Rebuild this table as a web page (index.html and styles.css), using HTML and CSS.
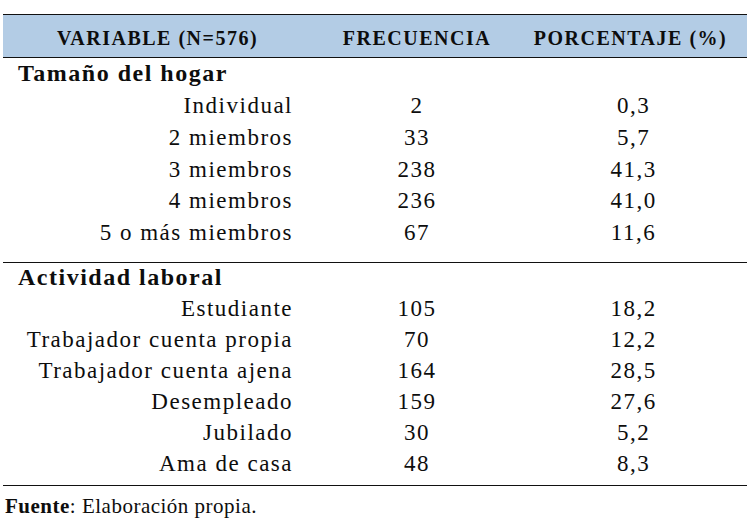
FILE: index.html
```html
<!DOCTYPE html>
<html lang="es">
<head>
<meta charset="utf-8">
<title>Tabla</title>
<link rel="stylesheet" href="styles.css">
</head>
<body>
<div class="page">
  <div class="table">
    <div class="row head">
      <div class="c1">VARIABLE (N=576)</div>
      <div class="c2">FRECUENCIA</div>
      <div class="c3">PORCENTAJE (%)</div>
    </div>
    <div class="group g1">
      <div class="title t1">Tamaño del hogar</div>
      <div class="row data"><div class="c1">Individual</div><div class="c2">2</div><div class="c3">0,3</div></div>
      <div class="row data"><div class="c1">2 miembros</div><div class="c2">33</div><div class="c3">5,7</div></div>
      <div class="row data"><div class="c1">3 miembros</div><div class="c2">238</div><div class="c3">41,3</div></div>
      <div class="row data"><div class="c1">4 miembros</div><div class="c2">236</div><div class="c3">41,0</div></div>
      <div class="row data"><div class="c1">5 o más miembros</div><div class="c2">67</div><div class="c3">11,6</div></div>
    </div>
    <div class="group g2">
      <div class="title t2">Actividad laboral</div>
      <div class="row data"><div class="c1">Estudiante</div><div class="c2">105</div><div class="c3">18,2</div></div>
      <div class="row data"><div class="c1">Trabajador cuenta propia</div><div class="c2">70</div><div class="c3">12,2</div></div>
      <div class="row data"><div class="c1">Trabajador cuenta ajena</div><div class="c2">164</div><div class="c3">28,5</div></div>
      <div class="row data"><div class="c1">Desempleado</div><div class="c2">159</div><div class="c3">27,6</div></div>
      <div class="row data"><div class="c1">Jubilado</div><div class="c2">30</div><div class="c3">5,2</div></div>
      <div class="row data"><div class="c1">Ama de casa</div><div class="c2">48</div><div class="c3">8,3</div></div>
    </div>
  </div>
  <p class="source"><b>Fuente</b>: Elaboración propia.</p>
</div>
</body>
</html>
```

FILE: styles.css
```css
html, body {
  margin: 0;
  padding: 0;
  background: #ffffff;
}
body {
  font-family: "Liberation Serif", Tinos, "Times New Roman", serif;
  color: #0d0d0d;
}
.page {
  padding: 14px 0 0 3px;
}
.table {
  width: 744px;
}
.row {
  display: grid;
  grid-template-columns: 309px 210px 225px;
}
.head {
  background: #b3cce5;
  border-top: 1px solid #111;
  border-bottom: 1px solid #111;
  padding-top: 4px;
  line-height: 38px;
  font-size: 20px;
  font-weight: bold;
  letter-spacing: 1.5px;
  text-align: center;
}
.head .c3 {
  padding-right: 8px;
}
.group {
  border-bottom: 1px solid #111;
}
.g1 {
  padding-bottom: 13px;
}
.g2 {
  padding-bottom: 6px;
}
.title {
  font-size: 24px;
  font-weight: bold;
  letter-spacing: 1.5px;
  padding-left: 15px;
  padding-bottom: 2px;
}
.t1 {
  line-height: 30px;
}
.t2 {
  line-height: 28px;
}
.data {
  font-size: 23px;
  letter-spacing: 1.5px;
}
.g1 .data {
  line-height: 31.75px;
}
.g2 .data {
  line-height: 31.1px;
}
.data .c1 {
  text-align: right;
  padding-right: 19px;
}
.data .c2 {
  text-align: center;
}
.data .c3 {
  text-align: center;
  padding-right: 2px;
}
.source {
  margin: 0;
  padding: 6px 0 0 2px;
  font-size: 21px;
  line-height: 28px;
  letter-spacing: 0.5px;
}
```
